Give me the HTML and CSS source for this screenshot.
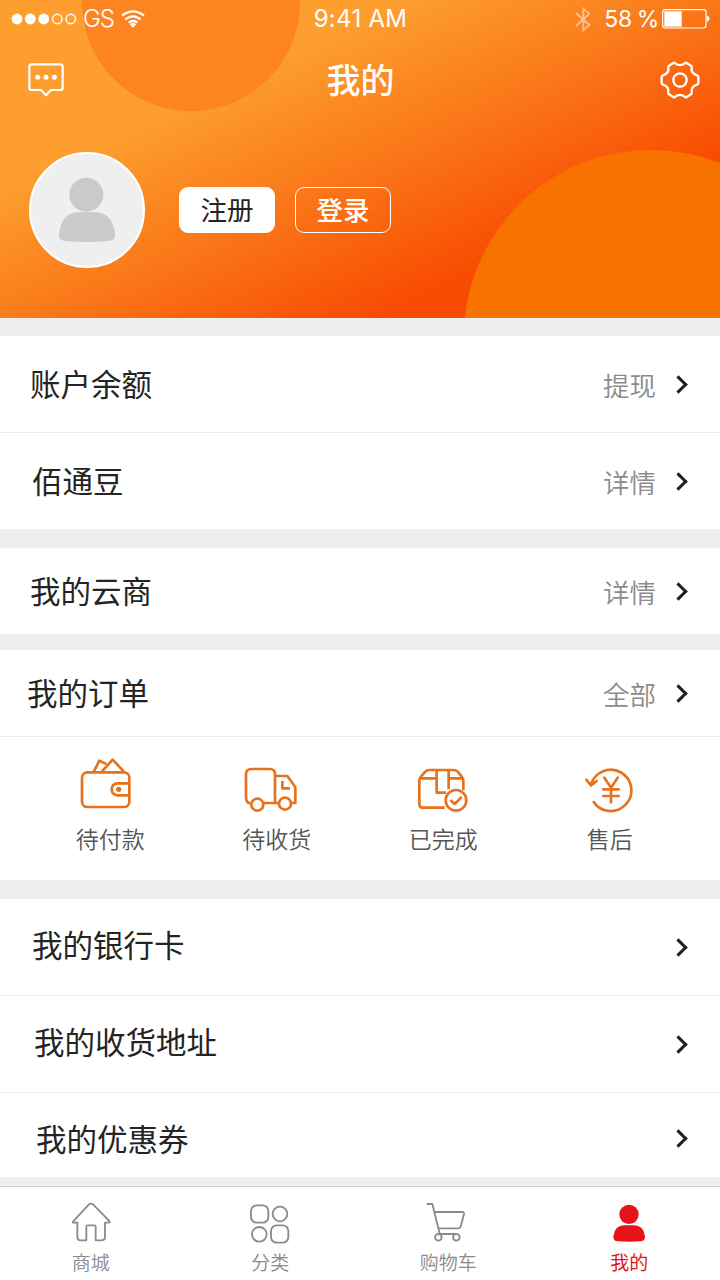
FILE: index.html
```html
<!DOCTYPE html>
<html lang="zh-CN">
<head>
<meta charset="utf-8">
<title>我的</title>
<link rel="stylesheet" href="styles.css">
</head>
<body>
<div class="page">
  <header class="hero">
    <div class="status">
      <div class="carrier">
        <svg class="signal" width="66" height="12" viewBox="0 0 66 12"><g fill="#fff"><circle cx="6" cy="6" r="5.4"/><circle cx="19.3" cy="6" r="5.4"/><circle cx="32.8" cy="6" r="5.4"/></g><g fill="none" stroke="#fff" stroke-width="1.5"><circle cx="46.3" cy="6" r="4.7"/><circle cx="59.8" cy="6" r="4.7"/></g></svg>
        <span class="operator">GS</span>
        <svg class="wifi" width="24" height="18" viewBox="0 0 72 54"><g fill="none" stroke="#fff" stroke-width="7"><path d="M3 17Q36-9 69 17"/><path d="M13 28Q36 10 59 28"/><path d="M23 38Q36 28 49 38"/></g><path d="M26 43Q36 35 46 43L36 53Z" fill="#fff"/></svg>
      </div>
      <span class="time">9:41 AM</span>
      <div class="power">
        <svg class="bluetooth" width="16" height="25" viewBox="0 0 48 75"><path d="M3 18L43 54 25 70V5L43 20 3 57" fill="none" stroke="#fff" stroke-width="5.5"/></svg>
        <span class="percent">58 %</span>
        <svg class="battery" width="48" height="20" viewBox="0 0 144 60"><rect x="2" y="2" width="130" height="55" rx="8" fill="none" stroke="#fff" stroke-width="3.5"/><path d="M7 7H59V53H7Z" fill="#fff"/><path d="M134 19Q143 23 143 29T134 39Z" fill="#fff"/></svg>
      </div>
    </div>
    <nav class="nav">
      <svg width="36" height="34" viewBox="0 0 108 102"><path d="M11 4H97Q104 4 104 11V74Q104 81 97 81H69L54 97 39 81H11Q4 81 4 74V11Q4 4 11 4Z" fill="none" stroke="#fff" stroke-width="6.5" stroke-linejoin="round"/><g fill="#fff"><circle cx="29" cy="43" r="7.5"/><circle cx="54" cy="43" r="7.5"/><circle cx="79" cy="43" r="7.5"/></g></svg>
      <h1 class="title">我的</h1>
      <svg width="40" height="38" viewBox="0 0 120 114"><g fill="none" stroke="#fff" stroke-width="7" stroke-linejoin="round"><path d="M40 6Q43 4 46 7Q60 18 74 7Q77 4 80 6L93 14Q96 16 95 20Q92 37 111 43Q115 44 115 48V66Q115 70 111 71Q92 77 95 94Q96 98 93 100L80 108Q77 110 74 107Q60 96 46 107Q43 110 40 108L27 100Q24 98 25 94Q28 77 9 71Q5 70 5 66V48Q5 44 9 43Q28 37 25 20Q24 16 27 14Z"/><circle cx="60" cy="57" r="20"/></g></svg>
    </nav>
    <section class="profile">
      <div class="avatar"><svg width="58" height="66" viewBox="0 0 174 198"><g fill="#cacaca"><circle cx="85" cy="53" r="51"/><path d="M27 193Q3 191 3 174Q10 106 61 106H111Q164 106 171 174Q171 191 147 193Q87 197 27 193Z"/></g></svg></div>
      <button class="btn register">注册</button>
      <button class="btn login">登录</button>
    </section>
  </header>

  <main class="content">
    <section class="group">
      <a class="row"><span class="name">账户余额</span><span class="value">提现</span><i class="chevron"></i></a>
      <a class="row beans"><span class="name">佰通豆</span><span class="value">详情</span><i class="chevron"></i></a>
    </section>
    <section class="group cloud">
      <a class="row"><span class="name">我的云商</span><span class="value">详情</span><i class="chevron"></i></a>
    </section>
    <section class="group orders">
      <a class="row"><span class="name">我的订单</span><span class="value">全部</span><i class="chevron"></i></a>
      <div class="steps">
        <a class="step"><svg width="72" height="56" viewBox="42 36 216 168"><g class="line"><rect x="66" y="82" width="142" height="104" rx="16"/><path d="M102 79L118 47L139 57M126 79L158 44L191 79M208 115H172Q155 117 155 133T172 151H208"/></g><circle cx="176" cy="133" r="8" fill="#e8721c"/></svg><span>待付款</span></a>
        <a class="step"><svg width="72" height="56" viewBox="543 36 216 168"><g class="line"><path d="M572 175Q558 173 558 158V88Q558 72 574 72H630Q645 72 645 88V174M611 174H655M645 93H682L703 122Q706 126 706 131V174H694M667 108V130H690"/><circle cx="592" cy="179" r="18"/><circle cx="675" cy="176" r="18"/></g></svg><span>待收货</span></a>
        <a class="step"><svg width="72" height="56" viewBox="51 36 216 168"><g class="line"><path d="M164 188H98Q88 188 88 178V108Q88 100 93 94L106 80Q110 75 118 75H190Q200 75 205 82L216 96Q220 102 220 109V136M89 100H138M176 100H219M140 76V143H168M176 76V133"/><circle cx="198" cy="166" r="31"/><path d="M184 168L194 177 213 158" stroke-linecap="round"/></g></svg><span>已完成</span></a>
        <a class="step"><svg width="72" height="56" viewBox="549 36 216 168"><g class="line round"><path d="M600 118A62 62 0 1 1 608 171M586 104L600 121 617 108M640 98L660 128 680 98M660 128V172M637 133H683M637 153H683"/></g></svg><span>售后</span></a>
      </div>
    </section>
    <section class="group more">
      <a class="row bank"><span class="name">我的银行卡</span><i class="chevron"></i></a>
      <a class="row address"><span class="name">我的收货地址</span><i class="chevron"></i></a>
      <a class="row coupon"><span class="name">我的优惠券</span><i class="chevron"></i></a>
    </section>
  </main>

  <footer class="tabs">
    <a class="tab"><svg width="42" height="42" viewBox="90 91 126 126"><path class="thin" d="M99 153L144 104Q153 94 162 104L208 151Q212 156 204 156H195V198Q195 209 184 209H167V167Q167 164 163 164H143Q139 164 139 167V209H123Q112 209 112 198V156H101Q96 156 99 153Z"/></svg><span>商城</span></a>
    <a class="tab"><svg width="42" height="42" viewBox="627 91 126 126"><g class="thin"><rect x="633" y="104" width="52" height="52" rx="17"/><circle cx="720" cy="130" r="22"/><circle cx="658" cy="191" r="22"/><rect x="693" y="164" width="52" height="52" rx="17"/></g></svg><span>分类</span></a>
    <a class="tab cart"><svg width="46" height="42" viewBox="75 91 138 126"><g class="thin"><path d="M80 100H97L119 189M105 124H187Q193 124 192 130L182 168Q181 173 175 173H116M119 190H167"/><circle cx="115" cy="200" r="10"/><circle cx="169" cy="200" r="10"/></g></svg><span>购物车</span></a>
    <a class="tab active"><svg width="42" height="42" viewBox="624 91 126 126"><g fill="#e6141a"><circle cx="687" cy="131" r="29"/><path d="M654 212Q639 212 640 197Q644 164 673 164H702Q731 164 735 197Q736 212 721 212Q687 214 654 212Z"/></g></svg><span>我的</span></a>
  </footer>
</div>
</body>
</html>
```

FILE: styles.css
```css
* { box-sizing: border-box; }
body { margin: 0; font-family: "Noto Sans CJK SC", sans-serif; color: #242424; background: #eeeeec; }
svg { display: block; flex: none; overflow: visible; }
.page { width: 720px; height: 1280px; display: flex; flex-direction: column; overflow: hidden; }

.hero {
  height: 318px;
  flex: none;
  color: #fff;
  background:
    radial-gradient(circle 109px at 191px 2px, #fd8420 108.5px, transparent 109.5px),
    radial-gradient(circle 187px at 651px 337px, #f87200 186.5px, transparent 187.5px),
    linear-gradient(155deg, #fd9e2f 29%, #fa7819 51%, #f84a01 76%);
}
.status { height: 38px; display: grid; grid-template-columns: 1fr auto 1fr; align-items: center; padding: 0 10px 0 11px; font: 24px/38px Inter, sans-serif; }
.carrier, .power { display: flex; align-items: center; }
.operator { margin-left: 6px; font-weight: 300; letter-spacing: -1px; }
.wifi { margin-left: 7px; }
.time { letter-spacing: 0.3px; }
.power { justify-content: flex-end; }
.bluetooth { opacity: 0.5; }
.percent { margin: 0 3px 0 13px; font-size: 23px; letter-spacing: -0.4px; word-spacing: -1px; }
.nav { height: 84px; display: flex; align-items: center; justify-content: space-between; padding: 0 20px 0 28px; }
.title { margin: -2px 3px 0 0; font-size: 34px; line-height: 50px; font-weight: 500; }
.profile { display: flex; align-items: center; padding: 30px 0 0 29px; }
.avatar { width: 116px; height: 116px; border: 2px solid #fff; border-radius: 50%; background: #eeefee; display: flex; align-items: center; justify-content: center; margin-right: 34px; }
.btn { width: 96px; height: 46px; padding: 0 0 2px; border: 1.5px solid #fff; border-radius: 9px; font: 26.5px/38px "Noto Sans CJK SC", sans-serif; margin-right: 20px; }
.register { background: #fff; color: #242424; }
.login { background: transparent; color: #fff; font-weight: 500; }

.content { display: flex; flex-direction: column; padding-top: 18px; }
.group { background: #fff; margin-bottom: 19px; }
.row { height: 97px; display: flex; align-items: center; padding: 0 31px 0 30px; border-bottom: 1px solid #ebebeb; }
.row:last-child { border-bottom: 0; height: 96px; }
.name { flex: 1; font-size: 30.5px; line-height: 44px; margin-top: -2px; }
.value { font-size: 26.5px; line-height: 38px; font-weight: 350; color: #8d8b89; margin: 1px 16px 0 0; }
.chevron { width: 13px; height: 13px; margin-right: 4px; border: solid #1e1e1e; border-width: 3px 3px 0 0; transform: rotate(45deg); }
.row.beans { padding-left: 32px; }
.cloud { margin-bottom: 16px; }
.cloud .row:last-child { height: 86px; }
.orders .row { height: 87px; padding-left: 27px; }
.steps { height: 143px; display: grid; grid-template-columns: repeat(4, 166.5px); padding: 20px 27px 0; }
.step { display: flex; flex-direction: column; align-items: center; font-size: 23px; line-height: 34px; font-weight: 350; color: #555; }
.step span { margin-top: 8px; }
.line { fill: none; stroke: #e8721c; stroke-width: 8; stroke-linejoin: round; }
.round { stroke-linecap: round; }
.more { margin-bottom: 9px; }
.bank { padding-left: 32px; }
.address { padding-left: 34px; }
.more .name { margin-top: -7px; }
.more .coupon { height: 84px; padding-left: 36px; padding-top: 6px; }
.more .coupon .name { margin-top: -1px; }

.tabs { flex: 1; display: grid; grid-template-columns: repeat(4, 1fr); padding: 14px 1px 0; background: #fff; border-top: 1px solid #cfcfcf; }
.tab { display: flex; flex-direction: column; align-items: center; font-size: 19px; line-height: 28px; font-weight: 350; color: #8b8b8b; }
.tab span { margin-top: 5px; }
.cart { padding-right: 3px; }
.active { color: #e6141a; font-weight: 400; }
.thin { fill: none; stroke: #8b8b8b; stroke-width: 5.5; stroke-linejoin: round; }
```
